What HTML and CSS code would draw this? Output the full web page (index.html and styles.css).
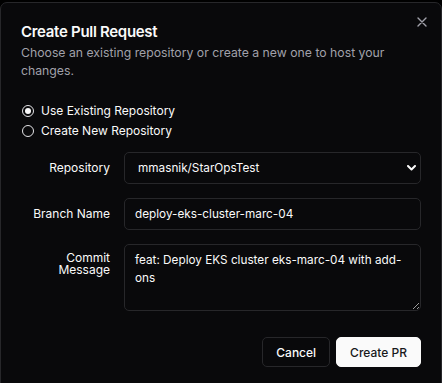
FILE: index.html
```html
<!DOCTYPE html>
<html lang="en">
<head>
    <meta charset="UTF-8">
    <meta name="viewport" content="width=device-width, initial-scale=1.0">
    <title>Create Pull Request</title>
    <link rel="stylesheet" href="styles.css">
</head>
<body>

    <div class="dialog">
        <button class="close" aria-label="Close">
            <svg width="10" height="10" viewBox="0 0 10 10" fill="none" stroke="currentColor" stroke-width="1.4" stroke-linecap="round">
                <path d="M1 1L9 9M9 1L1 9"/>
            </svg>
        </button>

        <div class="header">
            <h2>Create Pull Request</h2>
            <p>Choose an existing repository or create a new one to host your changes.</p>
        </div>

        <div class="radios">
            <label class="radio">
                <span class="dot checked"></span>
                Use Existing Repository
            </label>
            <label class="radio">
                <span class="dot"></span>
                Create New Repository
            </label>
        </div>

        <div class="form">
            <div class="label">Repository</div>
            <div class="field select">
                <span>mmasnik/StarOpsTest</span>
                <svg width="9" height="6" viewBox="0 0 9 6" fill="none" stroke="currentColor" stroke-width="2" stroke-linecap="round" stroke-linejoin="round">
                    <path d="M1 1L4.5 4.5L8 1"/>
                </svg>
            </div>

            <div class="label">Branch Name</div>
            <div class="field input">deploy-eks-cluster-marc-04</div>

            <div class="label top">Commit Message</div>
            <textarea class="field textarea">feat: Deploy EKS cluster eks-marc-04 with add-ons</textarea>
        </div>

        <div class="footer">
            <button class="btn outline">Cancel</button>
            <button class="btn primary">Create PR</button>
        </div>
    </div>

</body>
</html>
```

FILE: styles.css
```css
/* dialog */
body {
    margin: 0;
    background: #000;
    font-family: Inter, 'Liberation Sans', sans-serif;
    color: #fafafa;
    overflow: hidden;
}

.dialog {
    position: relative;
    box-sizing: border-box;
    width: 442px;
    height: 400px;
    margin-top: 2px;
    padding: 21px 20px;
    background: #09090b;
    border: 1px solid #27272a;
    border-radius: 7px;
}

.close {
    position: absolute;
    top: 14px;
    right: 14px;
    padding: 0;
    border: none;
    background: none;
    color: #a1a1aa;
    display: flex;
}

.header h2 {
    margin: 0;
    font-size: 15px;
    font-weight: 600;
    line-height: 1;
    letter-spacing: -0.3px;
}

.header p {
    margin: 5px 0 0;
    font-size: 12.25px;
    line-height: 17.5px;
    color: #a1a1aa;
    max-width: 380px;
}

.radios {
    display: flex;
    flex-direction: column;
    gap: 6px;
    margin-top: 25px;
}

.radio {
    display: flex;
    align-items: center;
    gap: 7px;
    font-size: 12px;
    line-height: 14px;
}

.dot {
    box-sizing: border-box;
    width: 12px;
    height: 12px;
    margin-left: 1px;
    border: 1px solid #e4e4e7;
    border-radius: 50%;
    display: flex;
    align-items: center;
    justify-content: center;
}

.dot.checked::after {
    content: "";
    width: 6px;
    height: 6px;
    border-radius: 50%;
    background: #fafafa;
}

.form {
    display: grid;
    grid-template-columns: 89px 1fr;
    column-gap: 14px;
    row-gap: 14px;
    align-items: center;
    margin-top: 14px;
}

.label {
    text-align: right;
    font-size: 12px;
    font-weight: 400;
    line-height: 1;
}

.label.top {
    align-self: start;
    padding-top: 8px;
}

.field {
    box-sizing: border-box;
    height: 32px;
    border: 1px solid #27272a;
    border-radius: 5px;
    background: #09090b;
    color: #fafafa;
    font-family: inherit;
    font-size: 11.75px;
}

.select {
    display: flex;
    align-items: center;
    justify-content: space-between;
    padding: 0 4px 0 13px;
}

.input {
    display: flex;
    align-items: center;
    padding: 0 10px;
}

.textarea {
    height: 67px;
    padding: 7px 10px;
    line-height: 17.5px;
    resize: vertical;
    outline: none;
}

.footer {
    display: flex;
    justify-content: flex-end;
    gap: 6px;
    margin-top: 26px;
}

.btn {
    height: 30px;
    padding: 0 13px;
    border-radius: 5px;
    font-family: inherit;
    font-size: 12px;
    font-weight: 500;
}

.outline {
    background: #09090b;
    border: 1px solid #27272a;
    color: #fafafa;
}

.primary {
    background: #fafafa;
    border: 1px solid #fafafa;
    color: #18181b;
}
```
